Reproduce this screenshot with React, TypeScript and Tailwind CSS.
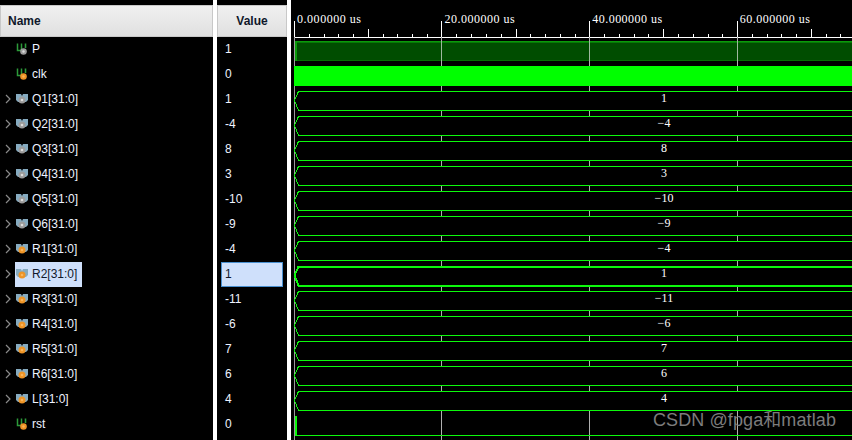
const rows = [
  { name: "P", value: "1", kind: "bit", dot: "gray" },
  { name: "clk", value: "0", kind: "bit", dot: "orange" },
  { name: "Q1[31:0]", value: "1", kind: "bus", dot: "gray" },
  { name: "Q2[31:0]", value: "-4", kind: "bus", dot: "gray" },
  { name: "Q3[31:0]", value: "8", kind: "bus", dot: "gray" },
  { name: "Q4[31:0]", value: "3", kind: "bus", dot: "gray" },
  { name: "Q5[31:0]", value: "-10", kind: "bus", dot: "gray" },
  { name: "Q6[31:0]", value: "-9", kind: "bus", dot: "gray" },
  { name: "R1[31:0]", value: "-4", kind: "bus", dot: "orange" },
  { name: "R2[31:0]", value: "1", kind: "bus", dot: "orange", selected: true },
  { name: "R3[31:0]", value: "-11", kind: "bus", dot: "orange" },
  { name: "R4[31:0]", value: "-6", kind: "bus", dot: "orange" },
  { name: "R5[31:0]", value: "7", kind: "bus", dot: "orange" },
  { name: "R6[31:0]", value: "6", kind: "bus", dot: "orange" },
  { name: "L[31:0]", value: "4", kind: "bus", dot: "orange" },
  { name: "rst", value: "0", kind: "bit", dot: "orange" },
];

const majors = [147, 295, 443];
const labels = ["0.000000 us", "20.000000 us", "40.000000 us", "60.000000 us"];
const GREEN = "#0cf80c";

function SignalIcon({ kind, dot }: { kind: string; dot: string }) {
  const fill = dot === "orange" ? "#ee9426" : "#9c9c9c";
  const inner = dot === "orange" ? "#f9b45c" : "#dcdcdc";
  return (
    <svg width="13" height="13" viewBox="0 0 13 13" className="shrink-0">
      {kind === "bit" ? (
        <>
          <path d="M1.5 1.5V8.5H5.5V1.5" fill="none" stroke="#2c9a3a" strokeWidth="1.5" />
          <path d="M9.5 1.5V6" fill="none" stroke="#2c9a3a" strokeWidth="1.6" />
          <circle cx="7.5" cy="9.5" r="3.3" fill={fill} />
          <circle cx="7.5" cy="9.5" r="1.2" fill={inner} />
        </>
      ) : (
        <>
          <path d="M0 2h5l1 2 1-2h5v6l-2 2H2L0 8z" fill="#86abc0" />
          <circle cx="6" cy="8" r="3.5" fill={fill} />
          <circle cx="6" cy="8" r="1.3" fill={inner} />
        </>
      )}
    </svg>
  );
}

function NamePanel() {
  return (
    <div className="w-[213px] shrink-0 pt-[5px]">
      <div className="h-[32px] flex items-center pl-[7px] text-[12px] font-bold text-[#10182a] border border-[#c8c8c8] bg-gradient-to-b from-[#f0f0f0] to-[#e0e0e0]">
        Name
      </div>
      {rows.map((r) => (
        <div key={r.name} className="h-[25px] flex items-center">
          <div className="w-[15px] flex justify-center pl-px pb-[2px] shrink-0">
            {r.kind === "bus" && (
              <svg width="7" height="10" viewBox="0 0 7 10">
                <path d="M1 1l4 4-4 4" fill="none" stroke="#8a8a8a" strokeWidth="1.2" />
              </svg>
            )}
          </div>
          <div className={`h-[25px] w-[67px] pb-[2px] flex items-center gap-[3px] pl-[1px] ${r.selected ? "bg-[#cfe0fb] text-[#10182a]" : "text-[#eef3ff]"}`}>
            <SignalIcon kind={r.kind} dot={r.dot} />
            <span className="text-[12px] whitespace-nowrap">{r.name}</span>
          </div>
        </div>
      ))}
    </div>
  );
}

function ValuePanel() {
  return (
    <div className="w-[70px] shrink-0 pt-[5px]">
      <div className="h-[32px] flex items-center justify-center text-[12px] font-bold text-[#10182a] border border-[#c8c8c8] bg-gradient-to-b from-[#f0f0f0] to-[#e0e0e0]">
        Value
      </div>
      {rows.map((r) => (
        <div key={r.name} className="h-[25px] flex items-center pl-1 pr-1">
          <div className={`w-[62px] h-[25px] pb-[2px] flex items-center pl-[3px] text-[12px] ${r.selected ? "bg-[#cfe0fb] border border-[#4a90d0] text-[#10182a]" : "border border-transparent text-[#eef3ff]"}`}>
            {r.value}
          </div>
        </div>
      ))}
    </div>
  );
}

function Waves() {
  const ticks = Array.from({ length: 39 }, (_, n) => n);
  return (
    <svg width="558" height="440" viewBox="0 0 558 440" className="block" shapeRendering="crispEdges">
      {/* time ruler */}
      <path d="M0 37.5H558" stroke="#fff" />
      {ticks.map((n) => {
        const x = Math.round(n * 14.77);
        if (n % 10 === 0) return null;
        return <path key={n} d={`M${x + 0.5} ${n % 5 === 0 ? 29 : 34}V37`} stroke="#fff" />;
      })}
      <path d="M0.5 21V37" stroke="#fff" />
      <path d="M0.5 37V440" stroke="#9a9a9a" />
      {majors.map((x) => (
        <path key={x} d={`M${x + 0.5} 21V37`} stroke="#fff" />
      ))}
      {majors.map((x) => (
        <path key={`g${x}`} d={`M${x + 0.5} 37V440`} stroke="#b0b0b0" />
      ))}
      {labels.map((l, i) => (
        <text
          key={l}
          x={3 + i * 147.6}
          y="23"
          fill="#fff"
          fontSize="12"
          fontFamily="'Liberation Serif', serif"
          textLength={i === 0 ? 64 : 70}
          lengthAdjust="spacing"
        >
          {l}
        </text>
      ))}

      {/* P */}
      <rect x="1" y="41" width="557" height="20" fill="#004d00" />
      <path d="M1 41.5H558" stroke="#0a9a0a" />
      <path d="M1 42.5H558" stroke="#067a06" />
      <path d="M1 60.5H558" stroke="#037003" />
      <rect x="1" y="41" width="2" height="20" fill="#0a9a0a" />
      {majors.map((x) => (
        <path key={`p${x}`} d={`M${x + 0.5} 41V61`} stroke="#9fb89f" />
      ))}

      {/* clk */}
      <rect x="0" y="66" width="558" height="20" fill="#00ff00" />

      {/* buses */}
      {rows.map((r, i) => {
        if (r.kind !== "bus") return null;
        const top = 41 + i * 25;
        const bot = top + 19;
        const mid = top + 9.5;
        return (
          <g key={r.name}>
            <rect x="1" y={top} width="557" height="19" fill="#000" />
            <path
              d={`M558 ${top + 0.5}H4.5L0.5 ${mid}L4.5 ${bot + 0.5}H558`}
              fill="none"
              stroke={GREEN}
              strokeWidth={r.selected ? 2 : 1}
            />
            <text
              x="370"
              y={top + 11}
              textAnchor="middle"
              fill="#fff"
              fontSize="12"
              fontFamily="'Liberation Serif', serif"
            >
              {r.value.replace("-", "−")}
            </text>
          </g>
        );
      })}

      {/* rst */}
      <path d="M1 416V435.5H558" fill="none" stroke={GREEN} />
      <rect x="1" y="416" width="2" height="19" fill={GREEN} />
    </svg>
  );
}

export default function App() {
  return (
    <main className="relative w-[852px] h-[440px] bg-black overflow-hidden flex font-['Liberation_Sans',sans-serif]">
      <NamePanel />
      <div className="w-[4px] shrink-0 bg-white" />
      <ValuePanel />
      <div className="w-[4px] shrink-0 bg-white" />
      <div className="w-[3px] shrink-0" />
      <Waves />
      <div className="absolute right-[16px] top-[409px] text-[18px] leading-[22px] tracking-[0.1px] whitespace-nowrap text-[#7c7c7c] font-['Liberation_Sans','Noto_Sans_CJK_SC',sans-serif]">
        CSDN @fpga和matlab
      </div>
    </main>
  );
}
